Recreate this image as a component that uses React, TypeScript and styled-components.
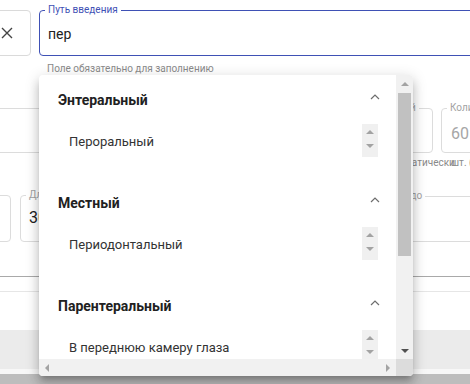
import React from 'react';
import styled, { createGlobalStyle } from 'styled-components';

const GlobalStyle = createGlobalStyle`
  html, body { margin: 0; padding: 0; background: #fff; }
  body { font-family: Roboto, 'Liberation Sans', Arial, sans-serif; }
`;

const BLUE = '#3f51b5';

const Page = styled.div`
  position: relative;
  width: 470px;
  height: 384px;
  overflow: hidden;
  box-sizing: border-box;
  padding-top: 10px;
  display: flex;
  flex-direction: column;
  background: #fff;
`;

const Row = styled.div<{ $mt?: number }>`
  display: flex;
  align-items: flex-start;
  gap: 8px;
  margin-top: ${({ $mt = 0 }) => $mt}px;
`;

const Column = styled.div<{ $w?: number; $ml?: number; $mr?: number; $mt?: number }>`
  display: flex;
  flex-direction: column;
  flex: ${({ $w }) => ($w ? `0 0 ${$w}px` : '1 0 80px')};
  margin: ${({ $mt = 0, $mr = 0, $ml = 0 }) => `${$mt}px ${$mr}px 0 ${$ml}px`};
  min-width: 0;
`;

const IconBox = styled.div`
  box-sizing: border-box;
  flex: 0 0 48px;
  height: 46px;
  margin-left: -17px;
  border: 1px solid #dadada;
  border-radius: 4px;
  display: flex;
  align-items: center;
  justify-content: center;
`;

const Field = styled.div<{ $h: number; $focused?: boolean }>`
  box-sizing: border-box;
  height: ${({ $h }) => $h}px;
  border: 1px solid ${({ $focused }) => ($focused ? BLUE : '#dcdcdc')};
  border-radius: 4px;
  display: flex;
  flex-direction: column;
`;

const Legend = styled.span<{ $focused?: boolean }>`
  align-self: flex-start;
  margin: -7px 0 0 5px;
  padding: 0 3px;
  background: #fff;
  font-size: 10px;
  line-height: 12px;
  white-space: nowrap;
  color: ${({ $focused }) => ($focused ? BLUE : '#a3a3a3')};
`;

const Value = styled.div<{ $pb?: number; $size?: number; $muted?: boolean; $pl?: number }>`
  flex: 1;
  display: flex;
  align-items: center;
  padding: 0 0 ${({ $pb = 0 }) => $pb}px ${({ $pl = 8 }) => $pl}px;
  font-size: ${({ $size = 16 }) => $size}px;
  color: ${({ $muted }) => ($muted ? '#a6a6a6' : '#212121')};
  white-space: nowrap;
`;

const Helper = styled.div<{ $mt?: number; $ml?: number }>`
  margin-top: ${({ $mt = 4 }) => $mt}px;
  margin-left: ${({ $ml = 8 }) => $ml}px;
  font-size: 10px;
  line-height: 12px;
  color: #8a8a8a;
  white-space: nowrap;
`;

const Divider = styled.div<{ $mt: number; $color: string }>`
  margin-top: ${({ $mt }) => $mt}px;
  border-top: 1px solid ${({ $color }) => $color};
`;

const Footer = styled.div`
  margin-top: 38px;
  flex: 1;
  display: flex;
  flex-direction: column;
`;

const FooterBand = styled.div<{ $h?: number; $bg: string }>`
  flex: ${({ $h }) => ($h ? `0 0 ${$h}px` : '1')};
  background: ${({ $bg }) => $bg};
`;

/* dropdown */

const Popup = styled.div`
  position: absolute;
  left: 39px;
  top: 75px;
  width: 374px;
  height: 301px;
  background: #fff;
  border-radius: 4px;
  overflow: hidden;
  box-shadow: 0 5px 5px -3px rgba(0, 0, 0, 0.2), 0 8px 10px 1px rgba(0, 0, 0, 0.14),
    0 3px 14px 2px rgba(0, 0, 0, 0.12);
  display: grid;
  grid-template-columns: 1fr 17px;
  grid-template-rows: 1fr 17px;
`;

const Content = styled.div`
  overflow: hidden;
  min-height: 0;
`;

const Group = styled.div`
  height: 103px;
`;

const GroupHeader = styled.div`
  height: 49px;
  display: flex;
  align-items: center;
  justify-content: space-between;
  padding: 0 16px 0 19px;
  font-size: 14px;
  font-weight: 700;
  color: #212121;
`;

const Chevron = styled.svg`
  margin-bottom: 6px;
`;

const List = styled.div`
  height: 33px;
  display: flex;
  align-items: flex-start;
  padding-right: 18px;
`;

const Item = styled.div`
  flex: 1;
  height: 33px;
  padding: 2px 0 0 30px;
  box-sizing: border-box;
  display: flex;
  align-items: center;
  font-size: 13px;
  color: #333;
  white-space: nowrap;
`;

const SpinBox = styled.div<{ $h: number }>`
  flex: 0 0 16px;
  height: ${({ $h }) => $h}px;
  background: #f0f0f0;
  display: flex;
  flex-direction: column;
  align-items: center;
  padding-top: 6px;
  gap: 10px;
  box-sizing: border-box;
`;

const Arrow = styled.span<{ $dir: 'up' | 'down' | 'left' | 'right'; $color?: string }>`
  width: 0;
  height: 0;
  border-style: solid;
  border-color: transparent;
  ${({ $dir, $color = '#a3a3a3' }) => {
    if ($dir === 'up') return `border-width: 0 4px 4px 4px; border-bottom-color: ${$color};`;
    if ($dir === 'down') return `border-width: 4px 4px 0 4px; border-top-color: ${$color};`;
    if ($dir === 'left') return `border-width: 4px 4px 4px 0; border-right-color: ${$color};`;
    return `border-width: 4px 0 4px 4px; border-left-color: ${$color};`;
  }}
`;

const VBar = styled.div`
  background: #f1f1f1;
  display: flex;
  flex-direction: column;
  align-items: center;
  min-height: 0;
`;

const HBar = styled.div`
  background: #f1f1f1;
  display: flex;
  align-items: center;
  justify-content: space-between;
  padding: 0 6px;
`;

const BarButton = styled.div`
  flex: 0 0 17px;
  height: 17px;
  display: flex;
  align-items: center;
  justify-content: center;
`;

const Thumb = styled.div`
  margin-top: 1px;
  width: 13px;
  height: 163px;
  background: #c1c1c1;
`;

const Spacer = styled.div`
  flex: 1;
`;

const Corner = styled.div`
  background: #dcdcdc;
`;

const groups = [
  { title: 'Энтеральный', item: 'Пероральный', spin: 33 },
  { title: 'Местный', item: 'Периодонтальный', spin: 33 },
  { title: 'Парентеральный', item: 'В переднюю камеру глаза', spin: 60 },
];

const CloseIcon = () => (
  <svg width="12" height="12" viewBox="0 0 12 12">
    <path d="M1 1 L11 11 M11 1 L1 11" stroke="#444" strokeWidth="1.4" fill="none" />
  </svg>
);

export default function App() {
  return (
    <>
      <GlobalStyle />
      <Page>
        <Row>
          <IconBox>
            <CloseIcon />
          </IconBox>
          <Column $mr={-30}>
            <Field $h={46} $focused>
              <Legend $focused>Путь введения</Legend>
              <Value $size={14} $pb={3}>пер</Value>
            </Field>
            <Helper $mt={7}>Поле обязательно для заполнению</Helper>
          </Column>
        </Row>

        <Row $mt={33}>
          <Column $w={331} $ml={-20}>
            <Field $h={45}>
              <Value />
            </Field>
          </Column>
          <Column $w={114}>
            <Field $h={45}>
              <Legend>Дозировка: общий</Legend>
              <Value />
            </Field>
            <Helper $ml={-16}>Рассчитывается автоматически</Helper>
          </Column>
          <Column $mr={-40}>
            <Field $h={45}>
              <Legend>Количество</Legend>
              <Value $muted $pl={9}>60</Value>
            </Field>
            <Helper $ml={10}>шт. (уп.)</Helper>
          </Column>
        </Row>

        <Row $mt={26}>
          <Column $w={31} $ml={-20}>
            <Field $h={47}>
              <Value />
            </Field>
          </Column>
          <Column $w={318} $ml={1}>
            <Field $h={47}>
              <Legend>Длительность, дней</Legend>
              <Value $pb={8}>30</Value>
            </Field>
          </Column>
          <Column $mr={-40} $mt={1}>
            <Field $h={46}>
              <Legend>Принимать до</Legend>
              <Value />
            </Field>
          </Column>
        </Row>

        <Divider $mt={34} $color="#a9a9a9" />
        <Divider $mt={14} $color="#e6e6e6" />
        <Footer>
          <FooterBand $h={39} $bg="#ebebeb" />
          <FooterBand $h={5} $bg="#f7f7f7" />
          <FooterBand $bg="#bdbdbd" />
        </Footer>

        <Popup>
          <Content>
            {groups.map((g) => (
              <Group key={g.title}>
                <GroupHeader>
                  <span>{g.title}</span>
                  <Chevron width="10" height="6" viewBox="0 0 10 6">
                    <polyline points="1,5 5,1 9,5" fill="none" stroke="#6e6e6e" strokeWidth="1.2" />
                  </Chevron>
                </GroupHeader>
                <List>
                  <Item>{g.item}</Item>
                  <SpinBox $h={g.spin}>
                    <Arrow $dir="up" />
                    <Arrow $dir="down" />
                  </SpinBox>
                </List>
              </Group>
            ))}
          </Content>
          <VBar>
            <BarButton>
              <Arrow $dir="up" />
            </BarButton>
            <Thumb />
            <Spacer />
            <BarButton>
              <Arrow $dir="down" $color="#505050" />
            </BarButton>
          </VBar>
          <HBar>
            <Arrow $dir="left" />
            <Arrow $dir="right" />
          </HBar>
          <Corner />
        </Popup>
      </Page>
    </>
  );
}
